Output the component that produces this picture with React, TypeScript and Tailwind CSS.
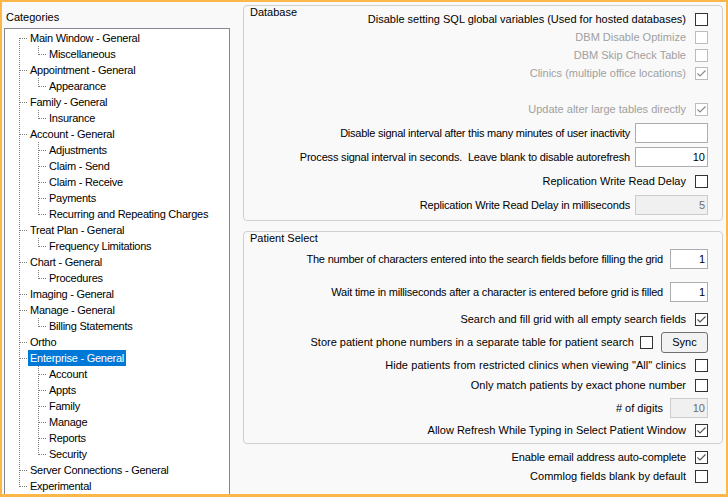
import React from "react";

type Node = { t: string; c: string[]; sel?: boolean };
type TreeRow = { text: string; level: 0 | 1; firstRoot?: boolean; lastRoot?: boolean; lastChild?: boolean; sel?: boolean };

const tree: Node[] = [
  { t: "Main Window - General", c: ["Miscellaneous"] },
  { t: "Appointment - General", c: ["Appearance"] },
  { t: "Family - General", c: ["Insurance"] },
  { t: "Account - General", c: ["Adjustments", "Claim - Send", "Claim - Receive", "Payments", "Recurring and Repeating Charges"] },
  { t: "Treat Plan - General", c: ["Frequency Limitations"] },
  { t: "Chart - General", c: ["Procedures"] },
  { t: "Imaging - General", c: [] },
  { t: "Manage - General", c: ["Billing Statements"] },
  { t: "Ortho", c: [] },
  { t: "Enterprise - General", c: ["Account", "Appts", "Family", "Manage", "Reports", "Security"], sel: true },
  { t: "Server Connections - General", c: [] },
  { t: "Experimental", c: [] },
];

const rows: TreeRow[] = [];
tree.forEach((n, i) => {
  rows.push({ text: n.t, level: 0, firstRoot: i === 0, lastRoot: i === tree.length - 1, sel: n.sel });
  n.c.forEach((c, j) => rows.push({ text: c, level: 1, lastChild: j === n.c.length - 1 }));
});

const TreeLines = ({ row }: { row: TreeRow }) => (
  <svg width={row.level === 0 ? 23 : 42} height={16} className="shrink-0" shapeRendering="crispEdges">
    <g stroke="#808080" strokeDasharray="1 1" strokeWidth={1}>
      {row.level === 0 ? (
        <>
          <line x1={14.5} x2={14.5} y1={row.firstRoot ? 8 : 0} y2={row.lastRoot ? 9 : 16} />
          <line x1={15} x2={23} y1={8.5} y2={8.5} />
        </>
      ) : (
        <>
          <line x1={14.5} x2={14.5} y1={0} y2={16} />
          <line x1={33.5} x2={33.5} y1={0} y2={row.lastChild ? 9 : 16} />
          <line x1={34} x2={42} y1={8.5} y2={8.5} />
        </>
      )}
    </g>
  </svg>
);

const Check = ({ on, dis }: { on?: boolean; dis?: boolean }) => (
  <span
    className={`flex h-[13px] w-[13px] shrink-0 items-center justify-center border bg-white ${
      dis ? "border-[#bcbcbc]" : "border-[#333333]"
    }`}
  >
    {on && (
      <svg width="11" height="11" viewBox="0 0 11 11">
        <path d="M1.5 5.5 L4 8 L9.5 2.5" fill="none" stroke={dis ? "#8a8a8a" : "#555555"} strokeWidth="1.2" />
      </svg>
    )}
  </span>
);

const Box = ({ value, dis, wide }: { value?: string; dis?: boolean; wide?: boolean }) => (
  <div
    className={`flex h-[20px] shrink-0 items-center justify-end border pr-[2px] ${wide ? "w-[73px]" : "w-[38px]"} ${
      dis ? "border-[#cccccc] bg-[#f0f0f0] text-[#6d6d6d]" : "border-[#abadb3] bg-white"
    }`}
  >
    {value}
  </div>
);

export default function App() {
  return (
    <div className="flex h-[497px] w-[728px] overflow-hidden border-t-2 border-r-2 border-b-[3px] border-l-2 border-[#fbb848] bg-[#f9f9f9] font-['Liberation_Sans',Arial,sans-serif] text-[11px] leading-[13px] text-black">
      {/* categories tree */}
      <div className="flex w-[228px] shrink-0 flex-col pt-[9px] pl-[2px]">
        <div className="h-[13px] pl-[2px]">Categories</div>
        <div className="mt-[4px] flex-1 border border-b-0 border-[#828790] bg-white pt-[1px] tracking-[-0.25px]">
          {rows.map((r, i) => (
            <div key={i} className="flex h-[16px] items-center">
              <TreeLines row={r} />
              <span className={`h-[16px] whitespace-nowrap px-[2px] leading-[16px] ${r.sel ? "bg-[#0078d7] text-white" : ""}`}>
                {r.text}
              </span>
            </div>
          ))}
        </div>
      </div>

      {/* settings */}
      <div className="ml-[13px] flex w-[480px] shrink-0 flex-col pt-[3px]">
        <div className="flex h-[216px] flex-col rounded-[4px] border border-[#d0d0d0] pr-[14px] pl-[6px]">
          <div className="flex items-start justify-between">
            <span>Database</span>
            <div className="mt-[4px] flex h-[18px] items-center gap-[9px]">
              <span>Disable setting SQL global variables (Used for hosted databases)</span>
              <Check />
            </div>
          </div>
          <div className="flex h-[18px] items-center justify-end gap-[9px] text-[#a0a0a0]">
            <span>DBM Disable Optimize</span>
            <Check dis />
          </div>
          <div className="flex h-[18px] items-center justify-end gap-[9px] text-[#a0a0a0]">
            <span>DBM Skip Check Table</span>
            <Check dis />
          </div>
          <div className="flex h-[18px] items-center justify-end gap-[9px] text-[#a0a0a0]">
            <span>Clinics (multiple office locations)</span>
            <Check dis on />
          </div>
          <div className="mt-[18px] flex h-[18px] items-center justify-end gap-[9px] text-[#a0a0a0]">
            <span>Update alter large tables directly</span>
            <Check dis on />
          </div>
          <div className="mt-[3px] flex h-[24px] items-center justify-end gap-[5px]">
            <span className="tracking-[-0.24px]">Disable signal interval after this many minutes of user inactivity</span>
            <Box wide />
          </div>
          <div className="flex h-[24px] items-center justify-end gap-[5px]">
            <span className="tracking-[-0.18px]">Process signal interval in seconds.&nbsp; Leave blank to disable autorefresh</span>
            <Box wide value="10" />
          </div>
          <div className="flex h-[24px] items-center justify-end gap-[9px]">
            <span>Replication Write Read Delay</span>
            <Check />
          </div>
          <div className="flex h-[24px] items-center justify-end gap-[5px]">
            <span className="tracking-[-0.18px]">Replication Write Read Delay in milliseconds</span>
            <Box wide dis value="5" />
          </div>
        </div>

        <div className="mt-[10px] flex h-[213px] flex-col rounded-[4px] border border-[#d0d0d0] pr-[14px] pl-[6px]">
          <div className="h-[13px]">Patient Select</div>
          <div className="mt-[2px] flex h-[24px] items-center justify-end gap-[7px]">
            <span className="tracking-[-0.2px]">The number of characters entered into the search fields before filling the grid</span>
            <Box value="1" />
          </div>
          <div className="mt-[9px] flex h-[24px] items-center justify-end gap-[7px]">
            <span className="tracking-[-0.2px]">Wait time in milliseconds after a character is entered before grid is filled</span>
            <Box value="1" />
          </div>
          <div className="mt-[6px] flex h-[18px] items-center justify-end gap-[9px]">
            <span>Search and fill grid with all empty search fields</span>
            <Check on />
          </div>
          <div className="mt-[2px] flex h-[24px] items-center justify-end">
            <span>Store patient phone numbers in a separate table for patient search</span>
            <span className="ml-[6px]">
              <Check />
            </span>
            <button className="ml-[8px] flex h-[21px] w-[47px] items-center justify-center rounded-[3px] border border-[#707070] bg-[#f2f2f2]">
              Sync
            </button>
          </div>
          <div className="mt-[2px] flex h-[18px] items-center justify-end gap-[9px]">
            <span className="tracking-[0.08px]">Hide patients from restricted clinics when viewing "All" clinics</span>
            <Check />
          </div>
          <div className="mt-[2px] flex h-[18px] items-center justify-end gap-[9px]">
            <span>Only match patients by exact phone number</span>
            <Check />
          </div>
          <div className="mt-[2px] flex h-[24px] items-center justify-end gap-[7px]">
            <span># of digits</span>
            <Box dis value="10" />
          </div>
          <div className="mt-[1px] flex h-[18px] items-center justify-end gap-[9px]">
            <span>Allow Refresh While Typing in Select Patient Window</span>
            <Check on />
          </div>
        </div>

        <div className="flex flex-col pr-[15px]">
          <div className="mt-[4px] flex h-[18px] items-center justify-end gap-[9px]">
            <span className="tracking-[-0.12px]">Enable email address auto-complete</span>
            <Check on />
          </div>
          <div className="mt-[1px] flex h-[18px] items-center justify-end gap-[9px]">
            <span>Commlog fields blank by default</span>
            <Check />
          </div>
        </div>
      </div>
    </div>
  );
}
